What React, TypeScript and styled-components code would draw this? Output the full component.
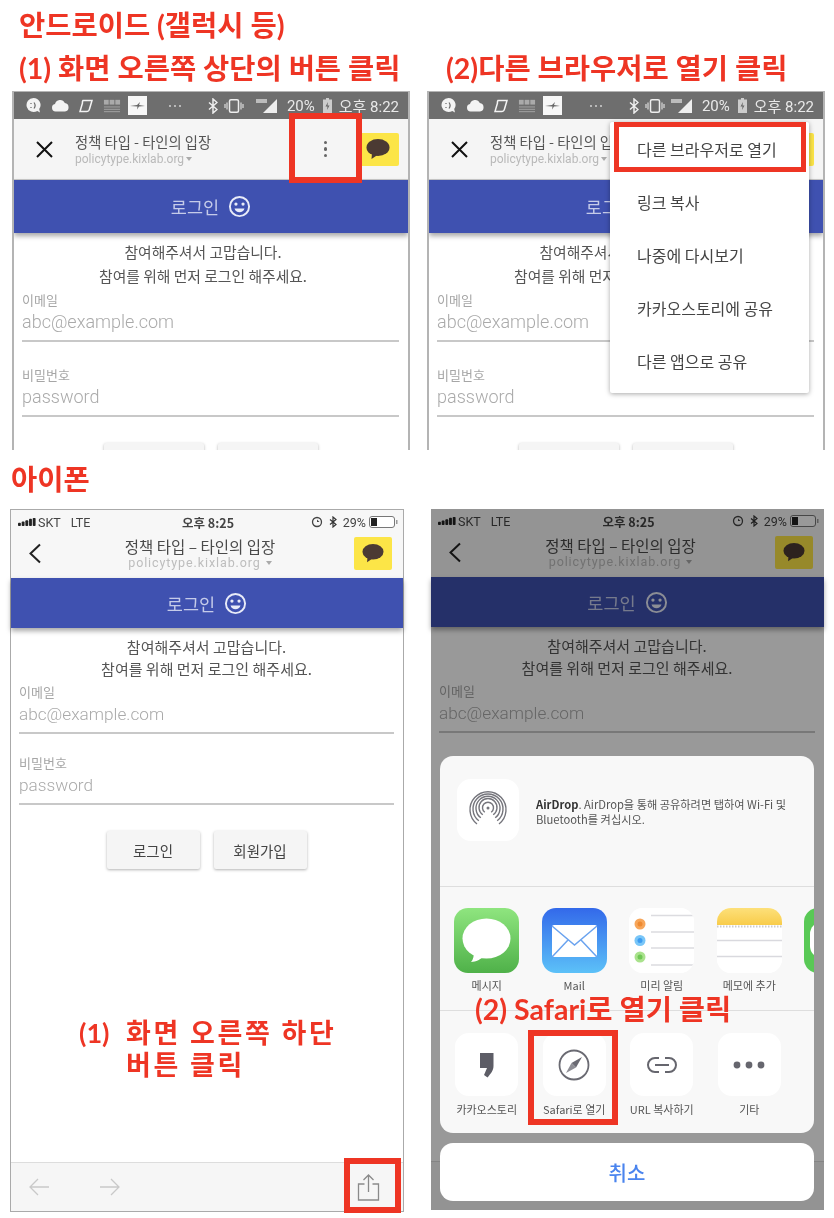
import React from "react";
import styled, { createGlobalStyle } from "styled-components";

const KR = `"Noto Sans CJK KR", "Noto Sans", sans-serif`;
const ANNOT = `Lato, "Noto Sans CJK KR", sans-serif`;
const UI = `Roboto, "Noto Sans CJK KR", sans-serif`;
const RED = "#ee3524";

const Global = createGlobalStyle`
  html, body { margin: 0; padding: 0; background: #fff; }
  * { box-sizing: border-box; }
`;

const Page = styled.div`
  position: relative;
  width: 834px;
  height: 1218px;
  overflow: hidden;
  background: #fff;
  font-family: ${KR};
  filter: blur(0.45px);
`;

const Annot = styled.div`
  font-family: ${ANNOT};
  font-weight: 700;
  font-size: 28.5px;
  line-height: 34px;
  color: ${RED};
  white-space: pre;
`;
const PlatformTitle = styled(Annot)<{ $left: number; $top: number }>`
  margin: ${(p) => p.$top}px 0 0 ${(p) => p.$left}px;
  height: 34px;
`;
const StepRow = styled.div`
  display: grid;
  grid-template-columns: 427px 1fr;
  margin-top: 9px;
  height: 38px;
  padding-left: 19px;
`;
const StepTitle = styled(Annot)``;

const PhoneRow = styled.div<{ $pad: number; $gap: number; $top: number }>`
  display: flex;
  gap: ${(p) => p.$gap}px;
  padding-left: ${(p) => p.$pad}px;
  margin-top: ${(p) => p.$top}px;
`;

/* ---------- Shared phone content ---------- */
const AndroidFrame = styled.div`
  position: relative;
  width: 398px;
  height: 359px;
  overflow: hidden;
  border: solid #b4b4b4;
  border-width: 1px 2px 0 2px;
  background: #fff;
  display: flex;
  flex-direction: column;
`;
const AndroidStatus = styled.div`
  height: 27px;
  flex: none;
  background: #6e6e6e;
  display: flex;
  align-items: center;
  padding: 0 9px 0 11px;
  color: #e9e9e9;
  font-family: ${UI};
  font-size: 15px;
`;
const IconGroup = styled.div<{ $gap: number; $ml?: string }>`
  display: flex;
  align-items: center;
  gap: ${(p) => p.$gap}px;
  margin-left: ${(p) => p.$ml ?? "0"};
`;
const StatusText = styled.span`
  white-space: nowrap;
`;
const AndroidHeader = styled.div`
  height: 61px;
  flex: none;
  background: #f5f5f5;
  border-bottom: 1px solid #c9c9c9;
  display: flex;
  align-items: center;
  padding: 0 9px 0 21px;
`;
const CloseBox = styled.div`
  width: 19px;
  height: 19px;
  margin-right: 21px;
  flex: none;
  display: flex;
`;
const TitleStack = styled.div`
  flex: 1;
  display: flex;
  flex-direction: column;
  gap: 1px;
`;
const PageTitle = styled.div`
  font-size: 14.3px;
  line-height: 18px;
  color: #555;
  white-space: nowrap;
`;
const PageUrl = styled.div`
  font-family: ${UI};
  font-size: 12px;
  line-height: 14px;
  color: #b9b9b9;
  display: flex;
  align-items: center;
  gap: 2px;
`;
const Caret = styled.span`
  display: inline-block;
  border-left: 3.5px solid transparent;
  border-right: 3.5px solid transparent;
  border-top: 4px solid #aaa;
`;
const Kebab = styled.div`
  display: flex;
  flex-direction: column;
  gap: 3px;
  margin-right: 30px;
`;
const KebabDot = styled.span`
  width: 3.5px;
  height: 3.5px;
  border-radius: 50%;
  background: #666;
`;
const KakaoBtn = styled.div<{ $w: number; $h: number }>`
  width: ${(p) => p.$w}px;
  height: ${(p) => p.$h}px;
  flex: none;
  background: #fce547;
  border-radius: 2px;
  display: flex;
  align-items: center;
  justify-content: center;
`;
const BlueBar = styled.div<{ $h: number }>`
  height: ${(p) => p.$h}px;
  flex: none;
  background: #3f51b0;
  color: #c5cbe9;
  font-size: 17.5px;
  display: flex;
  align-items: center;
  justify-content: center;
  gap: 9px;
  box-shadow: 0 3px 5px rgba(0, 0, 0, 0.35);
  position: relative;
`;

const Body = styled.div<{ $ios?: boolean }>`
  flex: 1;
  display: flex;
  flex-direction: column;
  padding: ${(p) => (p.$ios ? "8px 9px 0 8px" : "7px 9px 0 8px")};
`;
const Greeting = styled.div<{ $ios?: boolean }>`
  text-align: center;
  font-size: ${(p) => (p.$ios ? 15 : 14.8)}px;
  line-height: ${(p) => (p.$ios ? 22 : 24)}px;
  padding-right: ${(p) => (p.$ios ? 0 : 15)}px;
  color: #555;
  white-space: nowrap;
`;
const Field = styled.div<{ $mt: number }>`
  margin-top: ${(p) => p.$mt}px;
  border-bottom: 2px solid #c8c8c8;
  padding-bottom: 5px;
  display: flex;
  flex-direction: column;
  gap: 1px;
`;
const FieldLabel = styled.div`
  font-size: 13px;
  line-height: 16px;
  color: #a6a6a6;
`;
const Placeholder = styled.div<{ $ios?: boolean }>`
  font-family: ${UI};
  font-weight: 300;
  font-size: ${(p) => (p.$ios ? 17.2 : 18)}px;
  line-height: 26px;
  color: #aaa;
`;
const ButtonRow = styled.div<{ $mt: number; $w: number; $h: number }>`
  display: flex;
  justify-content: center;
  gap: 14px;
  margin-top: ${(p) => p.$mt}px;
  & > * {
    width: ${(p) => p.$w}px;
    height: ${(p) => p.$h}px;
  }
`;
const LoginBtn = styled.div`
  flex: none;
  background: #f5f5f5;
  border-radius: 2px;
  box-shadow: 0 1px 3px rgba(0, 0, 0, 0.3);
  color: #444;
  font-size: 14.5px;
  display: flex;
  align-items: center;
  justify-content: center;
`;

/* ---------- Overlays ---------- */
const RedBox = styled.div<{ $x: number; $y: number; $w: number; $h: number; $b?: number }>`
  position: absolute;
  left: ${(p) => p.$x}px;
  top: ${(p) => p.$y}px;
  width: ${(p) => p.$w}px;
  height: ${(p) => p.$h}px;
  border: ${(p) => p.$b ?? 6}px solid ${RED};
  z-index: 6;
`;
const Menu = styled.div`
  position: absolute;
  left: 181px;
  top: 30px;
  width: 199px;
  background: #fff;
  border-radius: 2px;
  box-shadow: 0 1px 5px rgba(0, 0, 0, 0.35);
  padding: 0 0 6px;
  z-index: 5;
`;
const MenuItem = styled.div`
  height: 53px;
  padding-left: 27px;
  display: flex;
  align-items: center;
  font-size: 16px;
  color: #444;
`;

/* ---------- iPhone ---------- */
const IosFrame = styled.div<{ $framed?: boolean; $w: number; $h: number }>`
  position: relative;
  width: ${(p) => p.$w}px;
  height: ${(p) => p.$h}px;
  display: flex;
  flex-direction: column;
  background: #fff;
  border: ${(p) => (p.$framed ? "1.5px solid #aaa" : "0 solid transparent")};
`;
const IosTop = styled.div`
  height: 68px;
  flex: none;
  background: #f7f7f7;
  display: flex;
  flex-direction: column;
`;
const IosStatus = styled.div`
  height: 24px;
  flex: none;
  display: grid;
  grid-template-columns: 1fr auto 1fr;
  align-items: center;
  padding: 0 5px 0 7px;
  font-family: ${UI};
  font-size: 12.5px;
  color: #444;
`;
const StatusLeft = styled.div`
  display: flex;
  align-items: center;
  gap: 2px;
`;
const StatusRight = styled.div`
  display: flex;
  align-items: center;
  justify-content: flex-end;
  gap: 6px;
`;
const TimeText = styled.span`
  font-weight: 700;
  font-size: 12.5px;
  font-family: ${KR};
`;
const IosNav = styled.div`
  flex: 1;
  display: flex;
  align-items: center;
  padding: 0 11px 5px 17px;
`;
const IosTitleStack = styled.div`
  flex: 1;
  display: flex;
  flex-direction: column;
  align-items: center;
  padding-left: 4px;
`;
const IosTitle = styled.div`
  font-size: 15.5px;
  line-height: 18px;
  color: #4a4a4a;
  white-space: nowrap;
`;
const IosUrl = styled.div`
  font-family: ${UI};
  font-size: 12.5px;
  line-height: 15px;
  color: #bdbdbd;
  letter-spacing: 0.9px;
  display: flex;
  align-items: center;
  gap: 5px;
`;
const BottomBar = styled.div`
  height: 49px;
  flex: none;
  background: #f6f6f6;
  border-top: 1.5px solid #ddd;
  display: flex;
  align-items: center;
  padding: 0 23px 0 17px;
  gap: 49px;
`;
const ShareSlot = styled.div`
  margin-left: auto;
  display: flex;
`;
const Callout = styled(Annot)<{ $x: number; $y: number }>`
  position: absolute;
  left: ${(p) => p.$x}px;
  top: ${(p) => p.$y}px;
  z-index: 7;
  line-height: 32px;
`;
const CalloutGrid = styled.div`
  display: grid;
  grid-template-columns: 47px auto;
  font-size: 27px;
  & > span:nth-child(even) {
    letter-spacing: 2.6px;
  }
`;
const Dim = styled.div`
  position: absolute;
  inset: 0;
  background: rgba(0, 0, 0, 0.4);
  z-index: 3;
`;
const SheetStack = styled.div`
  position: absolute;
  left: 9px;
  top: 247px;
  width: 374px;
  z-index: 4;
  display: flex;
  flex-direction: column;
  gap: 10px;
`;
const Sheet = styled.div`
  height: 377px;
  background: #f8f8f8;
  border-radius: 13px;
  overflow: hidden;
  display: flex;
  flex-direction: column;
`;
const AirDropRow = styled.div`
  height: 131px;
  flex: none;
  display: flex;
  align-items: flex-start;
  padding: 23px 0 0 17px;
  gap: 17px;
  border-bottom: 1px solid #dedede;
`;
const AirDropIcon = styled.div`
  width: 62px;
  height: 62px;
  border-radius: 14px;
  background: #fff;
  flex: none;
  display: flex;
  align-items: center;
  justify-content: center;
`;
const AirDropText = styled.div`
  font-size: 11.2px;
  line-height: 14.5px;
  color: #555;
  padding-top: 18px;
  white-space: nowrap;
  b { color: #333; font-weight: 700; }
`;
const AppRow = styled.div<{ $h: number; $pt: number; $line?: boolean }>`
  height: ${(p) => p.$h}px;
  flex: none;
  display: grid;
  grid-template-columns: repeat(5, 87.5px);
  padding: ${(p) => p.$pt}px 0 0 3px;
  border-bottom: ${(p) => (p.$line ? "1px solid #dedede" : "none")};
`;
const AppCell = styled.div<{ $labelTop: number }>`
  display: flex;
  flex-direction: column;
  align-items: center;
  gap: ${(p) => p.$labelTop}px;
`;
const AppIcon = styled.div<{ $s: number }>`
  width: ${(p) => p.$s}px;
  height: ${(p) => p.$s}px;
  border-radius: 14px;
  overflow: hidden;
  background: #fff;
  flex: none;
  display: flex;
  align-items: center;
  justify-content: center;
`;
const AppLabel = styled.div`
  font-size: 11px;
  line-height: 13px;
  color: #555;
  white-space: nowrap;
`;
const CancelBtn = styled.div`
  height: 58px;
  background: #fff;
  border-radius: 13px;
  color: #4a84ee;
  font-size: 20px;
  font-weight: 500;
  display: flex;
  align-items: center;
  justify-content: center;
`;

/* ---------- Drawn icons ---------- */
const Smiley = () => (
  <svg width="23" height="23" viewBox="0 0 24 24">
    <circle cx="12" cy="12" r="10" fill="none" stroke="#e8ebf8" strokeWidth="2" />
    <circle cx="8.3" cy="9.5" r="1.7" fill="#e8ebf8" />
    <circle cx="15.7" cy="9.5" r="1.7" fill="#e8ebf8" />
    <path d="M6.8 14h10.4c-.7 2.6-2.7 4-5.2 4s-4.500-1.400-5.200-4z" fill="#e8ebf8" />
  </svg>
);
const Bubble = ({ w = 24 }: { w?: number }) => (
  <svg width={w} height={w * 0.92} viewBox="0 0 24 22">
    <ellipse cx="12" cy="9.500" rx="11.500" ry="8.500" fill="#4b3a33" />
    <path d="M6 15l-.5 6 6-4z" fill="#4b3a33" />
  </svg>
);
const CloseX = () => (
  <svg width="19" height="19" viewBox="0 0 19 19">
    <path d="M2 2l15 15M17 2L2 17" stroke="#111" strokeWidth="2" />
  </svg>
);
const Chevron = () => (
  <svg width="14" height="21" viewBox="0 0 14 21">
    <path d="M12 1.500L2.500 10.500l9.500 9" fill="none" stroke="#222" strokeWidth="2" />
  </svg>
);

const AndroidIcons = () => (
  <IconGroup $gap={9}>
    <svg width="17" height="17" viewBox="0 0 17 17">
      <path d="M8.500 1a7 7 0 1 0 3.800 12.900L15 15.500l-.8-3.400A7 7 0 0 0 8.500 1z" fill="#f3f3f3" />
      <path d="M6 6v1M6 10v1M9 5.500c1.500 2 1.500 4 0 6" stroke="#666" strokeWidth="1.200" fill="none" />
    </svg>
    <svg width="18" height="13" viewBox="0 0 18 13">
      <path d="M4.500 12.500a3.800 3.800 0 0 1-.5-7.500 5.200 5.200 0 0 1 9.800-1A4.300 4.300 0 0 1 14 12.500z" fill="#f3f3f3" />
    </svg>
    <svg width="14" height="14" viewBox="0 0 14 14" style={{ marginLeft: 1 }}>
      <path d="M4 1.500h9L10.500 10a3 3 0 0 1-3 2.500H1L3.500 4A3 3 0 0 1 4 1.500z" fill="none" stroke="#f3f3f3" strokeWidth="1.500" />
    </svg>
    <svg width="18" height="14" viewBox="0 0 19 14" style={{ marginLeft: 1 }}>
      <rect x="1" y="0.500" width="5" height="5" fill="#aaa" />
      <rect x="7" y="0.500" width="5" height="5" fill="#aaa" />
      <rect x="13" y="0.500" width="5" height="5" fill="#aaa" />
      <path d="M1 8h17M1 10.500h17M1 13h17" stroke="#aaa" strokeWidth="0.900" />
    </svg>
    <svg width="19" height="19" viewBox="0 0 19 19" style={{ marginLeft: -2 }}>
      <rect width="19" height="19" fill="#f7f7f7" />
      <path d="M2 10l7-1 3-3-1 3 6 1-6 .5-2 3 .500-3z" fill="#666" />
    </svg>
  </IconGroup>
);
const AndroidRightIcons = ({ signalGap }: { signalGap: number }) => (
  <IconGroup $gap={6} $ml="auto">
    <svg width="14" height="6" viewBox="0 0 14 6" style={{ marginRight: 20 }}>
      <circle cx="2" cy="3" r="0.900" fill="#ddd" />
      <circle cx="7" cy="3" r="0.900" fill="#ddd" />
      <circle cx="12" cy="3" r="0.900" fill="#ddd" />
    </svg>
    <svg width="10" height="16" viewBox="0 0 10 16">
      <path d="M1 4.500l8 7-4 3.500V1l4 3.500-8 7" fill="none" stroke="#eee" strokeWidth="1.500" />
    </svg>
    <svg width="20" height="14" viewBox="0 0 20 14">
      <rect x="5.500" y="0.800" width="9" height="12.400" rx="1.500" fill="none" stroke="#eee" strokeWidth="1.500" />
      <path d="M3 3.500v7M1 5v4M17 3.500v7M19 5v4" stroke="#ddd" strokeWidth="1.200" />
    </svg>
    <svg width="22" height="15" viewBox="0 0 22 15" style={{ marginLeft: signalGap }}>
      <path d="M21 1v14H7z" fill="#eee" />
      <rect x="0" y="1" width="11" height="4" fill="#ddd" opacity="0.7" />
    </svg>
    <StatusText style={{ marginLeft: 3 }}>20%</StatusText>
    <svg width="9" height="15" viewBox="0 0 9 15" style={{ marginLeft: 2 }}>
      <path d="M3 0h3v1.500h3V15H0V1.500h3z" fill="#ccc" />
      <path d="M5 4L2.500 8.500h2L4 12l2.500-4.500h-2z" fill="#666" />
    </svg>
    <StatusText style={{ marginLeft: 1, fontFamily: UI }}>오후 8:22</StatusText>
  </IconGroup>
);

const Login = ({ ios, clipped, short }: { ios?: boolean; clipped?: boolean; short?: boolean }) => (
  <Body $ios={ios}>
    <Greeting $ios={ios}>
      참여해주셔서 고맙습니다.
      <br />
      참여를 위해 먼저 로그인 해주세요.
    </Greeting>
    <Field $mt={4}>
      <FieldLabel>이메일</FieldLabel>
      <Placeholder $ios={ios}>abc@example.com</Placeholder>
    </Field>
    {!short && (
      <>
        <Field $mt={ios ? 21 : 25}>
          <FieldLabel>비밀번호</FieldLabel>
          <Placeholder $ios={ios}>password</Placeholder>
        </Field>
        <ButtonRow $mt={ios ? 26 : 26} $w={ios ? 93 : 100} $h={38}>
          <LoginBtn>{!clipped && "로그인"}</LoginBtn>
          <LoginBtn>{!clipped && "회원가입"}</LoginBtn>
        </ButtonRow>
      </>
    )}
  </Body>
);

const AndroidScreen = ({ children, signalGap }: { children?: React.ReactNode; signalGap: number }) => (
  <AndroidFrame>
    <AndroidStatus>
      <AndroidIcons />
      <AndroidRightIcons signalGap={signalGap} />
    </AndroidStatus>
    <AndroidHeader>
      <CloseBox>
        <CloseX />
      </CloseBox>
      <TitleStack>
        <PageTitle>정책 타입 - 타인의 입장</PageTitle>
        <PageUrl>
          policytype.kixlab.org <Caret />
        </PageUrl>
      </TitleStack>
      <Kebab>
        <KebabDot />
        <KebabDot />
        <KebabDot />
      </Kebab>
      <KakaoBtn $w={42} $h={33}>
        <Bubble />
      </KakaoBtn>
    </AndroidHeader>
    <BlueBar $h={53}>
      로그인
      <Smiley />
    </BlueBar>
    <Login clipped />
    {children}
  </AndroidFrame>
);

const SignalBars = () => (
  <svg width="18" height="10" viewBox="0 0 22 10">
    <rect x="0" y="6" width="3.500" height="4" rx="1" fill="#222" />
    <rect x="4.500" y="4.500" width="3.500" height="5.500" rx="1" fill="#222" />
    <rect x="9" y="3" width="3.500" height="7" rx="1" fill="#222" />
    <rect x="13.500" y="1" width="3.500" height="9" rx="1" fill="#222" />
    <rect x="18" y="0" width="3.500" height="10" rx="1" fill="#222" />
  </svg>
);
const IosStatusBar = () => (
  <IosStatus>
    <StatusLeft>
      <SignalBars />
      <span>SKT</span>
      <span style={{ marginLeft: 8 }}>LTE</span>
    </StatusLeft>
    <TimeText>오후 8:25</TimeText>
    <StatusRight>
      <svg width="12" height="12" viewBox="0 0 12 12">
        <circle cx="6" cy="6" r="4.500" fill="none" stroke="#444" strokeWidth="1.300" />
        <path d="M6 3.500l2.500 2.500H6z" fill="#444" />
      </svg>
      <svg width="8" height="12" viewBox="0 0 8 12">
        <path d="M1 3.500l6 5-3 2.500V1l3 2.500-6 5" fill="none" stroke="#333" strokeWidth="1.200" />
      </svg>
      <span>29%</span>
      <svg width="29" height="12" viewBox="0 0 29 12" style={{ marginLeft: -3 }}>
        <rect x="0.500" y="0.500" width="25" height="11" rx="2.500" fill="#fff" stroke="#777" />
        <rect x="2" y="2" width="6" height="8" fill="#222" />
        <rect x="27" y="4" width="1.500" height="4" fill="#999" />
      </svg>
    </StatusRight>
  </IosStatus>
);
const IosHead = () => (
  <>
    <IosTop>
      <IosStatusBar />
      <IosNav>
        <Chevron />
        <IosTitleStack>
          <IosTitle>정책 타입 – 타인의 입장</IosTitle>
          <IosUrl>
            policytype.kixlab.org <Caret />
          </IosUrl>
        </IosTitleStack>
        <KakaoBtn $w={38} $h={33}>
          <Bubble w={22} />
        </KakaoBtn>
      </IosNav>
    </IosTop>
    <BlueBar $h={50}>
      로그인
      <Smiley />
    </BlueBar>
  </>
);

const BarArrow = ({ flip }: { flip?: boolean }) => (
  <svg width="22" height="20" viewBox="0 0 22 20" style={flip ? { transform: "scaleX(-1)" } : undefined}>
    <path d="M21 10H2M10 2l-8 8 8 8" fill="none" stroke="#c9c9c9" strokeWidth="1.300" />
  </svg>
);
const ShareIcon = () => (
  <svg width="23" height="27" viewBox="0 0 23 27">
    <path d="M7.500 10H1.500v16h20V10h-6M11.500 18V1.500M6.500 6l5-5 5 5" fill="none" stroke="#8a8a8a" strokeWidth="1.300" />
  </svg>
);

const MessagesArt = () => (
  <svg width="65" height="65" viewBox="0 0 65 65">
    <defs>
      <linearGradient id="mg" x1="0" y1="0" x2="0" y2="1">
        <stop offset="0" stopColor="#8fe57f" />
        <stop offset="1" stopColor="#4fb149" />
      </linearGradient>
    </defs>
    <rect width="65" height="65" fill="url(#mg)" />
    <ellipse cx="32.500" cy="30.500" rx="24" ry="20" fill="#fff" />
    <path d="M20 44c0 4-1 8-3 10 5 0 10-3 13-6z" fill="#fff" />
  </svg>
);
const MailArt = () => (
  <svg width="65" height="65" viewBox="0 0 65 65">
    <defs>
      <linearGradient id="ml" x1="0" y1="0" x2="0" y2="1">
        <stop offset="0" stopColor="#3369ea" />
        <stop offset="1" stopColor="#5cc1f8" />
      </linearGradient>
    </defs>
    <rect width="65" height="65" fill="url(#ml)" />
    <rect x="10" y="17" width="45" height="32" rx="2" fill="#fff" />
    <path d="M10 18l22.500 19L55 18M10 49l16-17M55 49L39 32" fill="none" stroke="#6aa3ef" strokeWidth="1.500" />
  </svg>
);
const RemindersArt = () => (
  <svg width="65" height="65" viewBox="0 0 65 65">
    <rect width="65" height="65" fill="#fff" />
    <g stroke="#dcdce0" strokeWidth="1.500">
      <path d="M22 7.500h43M22 24h43M22 40h43M22 57h43" />
    </g>
    <circle cx="11" cy="16" r="5.500" fill="#f7a65a" />
    <circle cx="11" cy="16" r="2.500" fill="#ee8a32" />
    <circle cx="11" cy="32.500" r="5.500" fill="#79c6f8" />
    <circle cx="11" cy="32.500" r="2.500" fill="#3d9cf0" />
    <circle cx="11" cy="49" r="5.500" fill="#a9e28c" />
    <circle cx="11" cy="49" r="2.500" fill="#6fc755" />
  </svg>
);
const NotesArt = () => (
  <svg width="65" height="65" viewBox="0 0 65 65">
    <defs>
      <linearGradient id="nt" x1="0" y1="0" x2="0" y2="1">
        <stop offset="0" stopColor="#fde07a" />
        <stop offset="1" stopColor="#f8cc4a" />
      </linearGradient>
    </defs>
    <rect width="65" height="65" fill="#fff" />
    <rect width="65" height="17" fill="url(#nt)" />
    <path d="M0 18.500h65" stroke="#ccc" strokeWidth="2" strokeDasharray="1.500 1.500" />
    <path d="M0 32.500h65M0 48.500h65" stroke="#d9d9de" strokeWidth="1.500" />
  </svg>
);
const NextArt = () => (
  <svg width="65" height="65" viewBox="0 0 65 65">
    <rect width="65" height="65" fill="#59c956" />
    <rect x="6" y="14" width="50" height="36" rx="12" fill="#fff" />
  </svg>
);
const AirDropArt = () => (
  <svg width="40" height="38" viewBox="0 0 40 38">
    <g fill="none" stroke="#75757c" strokeWidth="1.400">
      <path d="M9 33a18 18 0 1 1 22 0" />
      <path d="M10.800 29.800a15 15 0 1 1 18.400 0" />
      <path d="M12.800 26.800a12 12 0 1 1 14.400 0" />
      <path d="M14.800 23.800a9 9 0 1 1 10.400 0" />
      <path d="M16.800 21.200a5.500 5.500 0 1 1 6.400 0" />
    </g>
    <circle cx="20" cy="17" r="1.500" fill="#75757c" />
    <path d="M20 20l-6 12h12z" fill="#fff" />
  </svg>
);
const StoryArt = () => (
  <svg width="16" height="26" viewBox="0 0 16 26">
    <path d="M1 1h13.500v13c0 4.500-3 8-6 11.500L5 23l3-7H1z" fill="#5d5d66" />
  </svg>
);
const CompassArt = () => (
  <svg width="32" height="32" viewBox="0 0 32 32">
    <circle cx="16" cy="16" r="14.500" fill="none" stroke="#6a6a72" strokeWidth="1.800" />
    <path d="M24 8l-6 10.500L13.500 14z" fill="#6a6a72" />
    <path d="M8 24l5.500-10 4.500 4.500z" fill="#8d8d94" />
  </svg>
);
const LinkArt = () => (
  <svg width="32" height="18" viewBox="0 0 32 18">
    <path
      d="M13 2H9a7 7 0 0 0 0 14h4M19 2h4a7 7 0 0 1 0 14h-4M9 9h14"
      fill="none"
      stroke="#66666e"
      strokeWidth="2"
    />
  </svg>
);
const DotsArt = () => (
  <svg width="32" height="8" viewBox="0 0 32 8">
    <circle cx="4" cy="4" r="3.400" fill="#66666e" />
    <circle cx="16" cy="4" r="3.400" fill="#66666e" />
    <circle cx="28" cy="4" r="3.400" fill="#66666e" />
  </svg>
);

const ShareSheet = () => (
  <SheetStack>
    <Sheet>
      <AirDropRow>
        <AirDropIcon>
          <AirDropArt />
        </AirDropIcon>
        <AirDropText>
          <b>AirDrop</b>. AirDrop을 통해 공유하려면 탭하여 Wi-Fi 및
          <br />
          Bluetooth를 켜십시오.
        </AirDropText>
      </AirDropRow>
      <AppRow $h={124} $pt={21} $line>
        <AppCell $labelTop={6}>
          <AppIcon $s={65}>
            <MessagesArt />
          </AppIcon>
          <AppLabel>메시지</AppLabel>
        </AppCell>
        <AppCell $labelTop={6}>
          <AppIcon $s={65}>
            <MailArt />
          </AppIcon>
          <AppLabel>Mail</AppLabel>
        </AppCell>
        <AppCell $labelTop={6}>
          <AppIcon $s={65}>
            <RemindersArt />
          </AppIcon>
          <AppLabel>미리 알림</AppLabel>
        </AppCell>
        <AppCell $labelTop={6}>
          <AppIcon $s={65}>
            <NotesArt />
          </AppIcon>
          <AppLabel>메모에 추가</AppLabel>
        </AppCell>
        <AppCell $labelTop={6}>
          <AppIcon $s={65}>
            <NextArt />
          </AppIcon>
          <AppLabel>네</AppLabel>
        </AppCell>
      </AppRow>
      <AppRow $h={122} $pt={22}>
        <AppCell $labelTop={7}>
          <AppIcon $s={63}>
            <StoryArt />
          </AppIcon>
          <AppLabel>카카오스토리</AppLabel>
        </AppCell>
        <AppCell $labelTop={7}>
          <AppIcon $s={63}>
            <CompassArt />
          </AppIcon>
          <AppLabel>Safari로 열기</AppLabel>
        </AppCell>
        <AppCell $labelTop={7}>
          <AppIcon $s={63}>
            <LinkArt />
          </AppIcon>
          <AppLabel>URL 복사하기</AppLabel>
        </AppCell>
        <AppCell $labelTop={7}>
          <AppIcon $s={63}>
            <DotsArt />
          </AppIcon>
          <AppLabel>기타</AppLabel>
        </AppCell>
      </AppRow>
    </Sheet>
    <CancelBtn>취소</CancelBtn>
  </SheetStack>
);

const IosBottom = () => (
  <BottomBar>
    <BarArrow />
    <BarArrow flip />
    <ShareSlot>
      <ShareIcon />
    </ShareSlot>
  </BottomBar>
);

export default function App() {
  return (
    <>
      <Global />
      <Page>
        <PlatformTitle $left={19} $top={8}>안드로이드 (갤럭시 등)</PlatformTitle>
        <StepRow>
          <StepTitle>(1) 화면 오른쪽 상단의 버튼 클릭</StepTitle>
          <StepTitle>(2)다른 브라우저로 열기 클릭</StepTitle>
        </StepRow>
        <PhoneRow $pad={12} $gap={17} $top={2}>
          <AndroidScreen signalGap={6}>
            <RedBox $x={275} $y={21} $w={73} $h={70} />
          </AndroidScreen>
          <AndroidScreen signalGap={0}>
            <Menu>
              <MenuItem>다른 브라우저로 열기</MenuItem>
              <MenuItem>링크 복사</MenuItem>
              <MenuItem>나중에 다시보기</MenuItem>
              <MenuItem>카카오스토리에 공유</MenuItem>
              <MenuItem>다른 앱으로 공유</MenuItem>
            </Menu>
            <RedBox $x={185} $y={30} $w={192} $h={50} $b={5} />
          </AndroidScreen>
        </PhoneRow>
        <PlatformTitle $left={11} $top={12}>아이폰</PlatformTitle>
        <PhoneRow $pad={10} $gap={27} $top={13}>
          <IosFrame $framed $w={394} $h={703}>
            <IosHead />
            <Login ios />
            <IosBottom />
            <Callout $x={68} $y={507}>
              <CalloutGrid>
                <span>(1)</span>
                <span>화면 오른쪽 하단</span>
                <span />
                <span>버튼 클릭</span>
              </CalloutGrid>
            </Callout>
            <RedBox $x={333} $y={648} $w={57} $h={55} />
          </IosFrame>
          <IosFrame $w={393} $h={701}>
            <IosHead />
            <Login ios short />
            <IosBottom />
            <Dim />
            <ShareSheet />
            <Callout $x={44} $y={484}>(2) Safari로 열기 클릭</Callout>
            <RedBox $x={97} $y={521} $w={90} $h={95} />
          </IosFrame>
        </PhoneRow>
      </Page>
    </>
  );
}
